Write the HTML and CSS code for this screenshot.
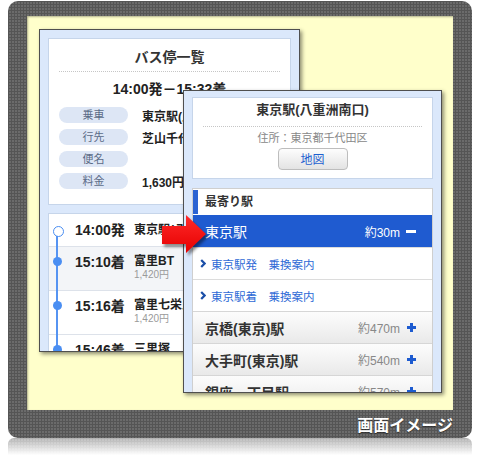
FILE: index.html
```html
<!DOCTYPE html>
<html lang="ja">
<head>
<meta charset="utf-8">
<title>画面イメージ</title>
<link rel="stylesheet" href="styles.css">
</head>
<body>
<div class="stage">
  <div class="frame">
    <div class="canvas">
      <div class="window win-list">
        <div class="card summary">
          <h1 class="title">バス停一覧</h1>
          <div class="sep"></div>
          <div class="timespan">14:00発－15:32着</div>
          <dl class="info">
            <div class="info-row"><dt>乗車</dt><dd>東京駅(八重洲南口)</dd></div>
            <div class="info-row"><dt>行先</dt><dd>芝山千代田駅</dd></div>
            <div class="info-row"><dt>便名</dt><dd></dd></div>
            <div class="info-row"><dt>料金</dt><dd>1,630円</dd></div>
          </dl>
        </div>
        <div class="card timeline">
          <div class="stop first">
            <span class="mark open"></span>
            <span class="time">14:00発</span>
            <div class="name"><b>東京駅(八重洲南口)</b></div>
          </div>
          <div class="stop alt">
            <span class="mark"></span>
            <span class="time">15:10着</span>
            <div class="name"><b>富里BT</b><span class="price">1,420円</span></div>
          </div>
          <div class="stop">
            <span class="mark"></span>
            <span class="time">15:16着</span>
            <div class="name"><b>富里七栄入口</b><span class="price">1,420円</span></div>
          </div>
          <div class="stop">
            <span class="mark"></span>
            <span class="time">15:46着</span>
            <div class="name"><b>三里塚</b><span class="price">1,630円</span></div>
          </div>
        </div>
      </div>

      <div class="window win-station">
        <div class="card place">
          <h2 class="place-name">東京駅(八重洲南口)</h2>
          <div class="sep"></div>
          <p class="address">住所：東京都千代田区</p>
          <button class="map-btn" type="button">地図</button>
        </div>
        <section class="nearby">
          <h3 class="nearby-head">最寄り駅</h3>
          <div class="st st-open"><span class="st-name">東京駅</span><span class="st-dist">約30m</span><span class="minus"></span></div>
          <a class="route"><svg class="chev" width="6" height="9" viewBox="0 0 6 9"><path d="M1.2 1 L4.6 4.5 L1.2 8" fill="none" stroke="#1b4fa8" stroke-width="2.2"/></svg>東京駅発　乗換案内</a>
          <a class="route"><svg class="chev" width="6" height="9" viewBox="0 0 6 9"><path d="M1.2 1 L4.6 4.5 L1.2 8" fill="none" stroke="#1b4fa8" stroke-width="2.2"/></svg>東京駅着　乗換案内</a>
          <div class="st"><span class="st-name">京橋(東京)駅</span><span class="st-dist">約470m</span><span class="plus"></span></div>
          <div class="st"><span class="st-name">大手町(東京)駅</span><span class="st-dist">約540m</span><span class="plus"></span></div>
          <div class="st"><span class="st-name">銀座一丁目駅</span><span class="st-dist">約570m</span><span class="plus"></span></div>
        </section>
      </div>

      <svg class="arrow" width="54" height="50" viewBox="0 0 54 50">
        <defs>
          <linearGradient id="ag" x1="0" y1="0" x2="0" y2="1">
            <stop offset="0" stop-color="#ff2a2a"/>
            <stop offset="1" stop-color="#e60000"/>
          </linearGradient>
          <filter id="blur" x="-20%" y="-20%" width="140%" height="140%">
            <feGaussianBlur stdDeviation="1.5"/>
          </filter>
        </defs>
        <polygon points="4,16 28,16 28,5 48,24 28,43 28,34 4,34" fill="rgba(0,0,0,0.45)" filter="url(#blur)"/>
        <polygon points="2,13 26,13 26,2 46,21 26,40 26,31 2,31" fill="url(#ag)"/>
      </svg>
    </div>
    <div class="caption">画面イメージ</div>
  </div>
  <div class="reflection"></div>
</div>
</body>
</html>
```

FILE: styles.css
```css
* { box-sizing: border-box; }

body {
  margin: 0;
  background: #fff;
  font-family: "Liberation Sans", "Noto Sans CJK JP", sans-serif;
  color: #222;
}

.stage {
  width: 480px;
  height: 457px;
  overflow: hidden;
  padding-top: 1px;
}

.frame {
  margin-left: 8px;
  width: 464px;
  height: 437px;
  padding: 15px 19px 0;
  border-radius: 10px;
  background-color: #6b6b6b;
  background-image:
    linear-gradient(90deg, #555 1px, transparent 1px),
    linear-gradient(#555 1px, transparent 1px);
  background-size: 3px 3px;
}

.canvas {
  position: relative;
  height: 394px;
  background: #ffffcb;
  overflow: hidden;
  box-shadow: inset 1px 1px 2px rgba(0, 0, 0, 0.3);
}

.caption {
  height: 28px;
  line-height: 28px;
  text-align: right;
  color: #fff;
  font-family: "Noto Sans CJK JP", sans-serif;
  font-weight: 700;
  font-size: 16px;
  text-shadow: 0 1px 1px rgba(0, 0, 0, 0.5);
}

.reflection {
  margin-left: 8px;
  width: 464px;
  height: 19px;
  border-radius: 6px 6px 0 0;
  background-color: #9a9a9a;
  background-image:
    linear-gradient(rgba(255, 255, 255, 0.35), #fff 90%),
    linear-gradient(90deg, #888 1px, transparent 1px),
    linear-gradient(#888 1px, transparent 1px);
  background-size: 100% 100%, 3px 3px, 3px 3px;
}

/* windows */
.window {
  position: absolute;
  border: 1px solid #4f4f4f;
  background: #dbe8fb;
  box-shadow: 2px 2px 4px rgba(0, 0, 0, 0.45);
  overflow: hidden;
}

.win-list {
  left: 12px;
  top: 13px;
  width: 261px;
  height: 323px;
  padding: 8px;
}

.win-station {
  left: 156px;
  top: 74px;
  width: 259px;
  height: 303px;
  padding: 6px 8px 0;
}

.card {
  background: #fff;
  border: 1px solid #c6d5ea;
}

.sep {
  border-top: 1px dotted #c6c6c6;
}

/* summary card */
.summary {
  padding: 9px 10px 15px;
}

.title {
  margin: 0 0 5px;
  font-size: 14px;
  line-height: 18px;
  font-weight: 700;
  text-align: center;
  color: #333;
}

.timespan {
  margin-top: 8px;
  font-size: 14px;
  line-height: 18px;
  font-weight: 700;
  text-align: center;
  color: #222;
}

.info {
  margin: 9px 0 0;
  display: flex;
  flex-direction: column;
  gap: 6px;
}

.info-row {
  display: flex;
  align-items: center;
  height: 16px;
}

.info dt {
  flex: none;
  width: 69px;
  height: 16px;
  line-height: 16px;
  border-radius: 8px;
  background: #dde6f5;
  color: #5b6b87;
  font-size: 11px;
  text-align: center;
}

.info dd {
  margin: 0 0 0 14px;
  font-size: 12px;
  font-weight: 700;
  color: #222;
  white-space: nowrap;
}

/* timeline */
.timeline {
  margin-top: 8px;
}

.stop {
  display: grid;
  grid-template-columns: 17px 68px 1fr;
  height: 44px;
}

.stop + .stop {
  border-top: 1px solid #dde2ea;
}

.stop.first {
  height: 32px;
  align-items: center;
}

.stop.alt {
  background: #f3f5f8;
}

.mark {
  position: relative;
  align-self: stretch;
}

.mark::before {
  content: "";
  position: absolute;
  left: 7px;
  width: 2px;
  top: -1px;
  bottom: -1px;
  background: #5694f2;
}

.first .mark::before {
  top: 50%;
}

.mark::after {
  content: "";
  position: absolute;
  left: 3.5px;
  top: 10px;
  width: 9px;
  height: 9px;
  border-radius: 50%;
  background: #4a8ef2;
}

.first .mark::after {
  top: 11.5px;
  background: #fff;
  border: 1.5px solid #4a8ef2;
}

.time {
  padding-left: 9px;
  font-size: 14px;
  line-height: 18px;
  font-weight: 700;
  color: #222;
  white-space: nowrap;
}

.stop:not(.first) .time {
  padding-top: 6px;
}

.name {
  font-size: 12px;
  line-height: 15px;
  color: #222;
  white-space: nowrap;
}

.stop:not(.first) .name {
  padding-top: 7px;
}

.name b {
  display: block;
  font-weight: 700;
}

.price {
  display: block;
  font-size: 10px;
  line-height: 12px;
  color: #9a9a9a;
}

/* station window */
.place {
  padding: 3px 10px 8px;
  text-align: center;
}

.place-name {
  margin: 0 0 7px;
  font-size: 13px;
  line-height: 18px;
  font-weight: 700;
  color: #333;
}

.address {
  margin: 4px 0 0;
  font-size: 11px;
  line-height: 14px;
  color: #888;
}

.map-btn {
  display: block;
  margin: 3px auto 0;
  width: 70px;
  height: 22px;
  padding: 0;
  border: 1px solid #bdbdbd;
  border-radius: 4px;
  background: linear-gradient(#fdfdfd, #e3e3e3);
  color: #1e5fd0;
  font-family: "Noto Sans CJK JP", sans-serif;
  font-size: 12px;
  line-height: 20px;
}

.nearby {
  margin-top: 9px;
  border: 1px solid #cfcfcf;
  background: #fff;
}

.nearby-head {
  position: relative;
  margin: 0;
  height: 26px;
  line-height: 26px;
  padding-left: 12px;
  font-size: 12px;
  font-weight: 700;
  color: #333;
}

.nearby-head::before {
  content: "";
  position: absolute;
  left: 0;
  top: 1px;
  bottom: 1px;
  width: 5px;
  background: #2b63d3;
}

.st {
  display: flex;
  align-items: center;
  height: 32px;
  padding: 0 16px 0 12px;
  border-top: 1px solid #d6d6d6;
  background: linear-gradient(#fcfcfc, #f4f4f4 45%, #e9e9e9);
}

.st-name {
  font-size: 14px;
  font-weight: 700;
  color: #333;
  white-space: nowrap;
}

.st-dist {
  margin-left: auto;
  font-size: 12px;
  color: #888;
}

.st-open {
  height: 32px;
  border-top: none;
  background: #1f5bd0;
}

.st-open .st-name {
  font-weight: 400;
  color: #fff;
}

.st-open .st-dist {
  color: #fff;
}

.minus {
  margin-left: 6px;
  width: 10px;
  height: 3px;
  background: #fff;
}

.plus {
  position: relative;
  margin-left: 7px;
  width: 9px;
  height: 9px;
}

.plus::before,
.plus::after {
  content: "";
  position: absolute;
  background: #1d5bd0;
}

.plus::before {
  left: 0;
  right: 0;
  top: 3px;
  height: 3px;
}

.plus::after {
  top: 0;
  bottom: 0;
  left: 3px;
  width: 3px;
}

.route {
  display: flex;
  align-items: center;
  gap: 5px;
  height: 32px;
  padding-left: 7px;
  border-top: 1px solid #dcdcdc;
  color: #2e6ad6;
  font-size: 11.5px;
  text-decoration: none;
  white-space: nowrap;
}

.chev {
  flex: none;
}

.arrow {
  position: absolute;
  left: 133px;
  top: 197px;
}
```
